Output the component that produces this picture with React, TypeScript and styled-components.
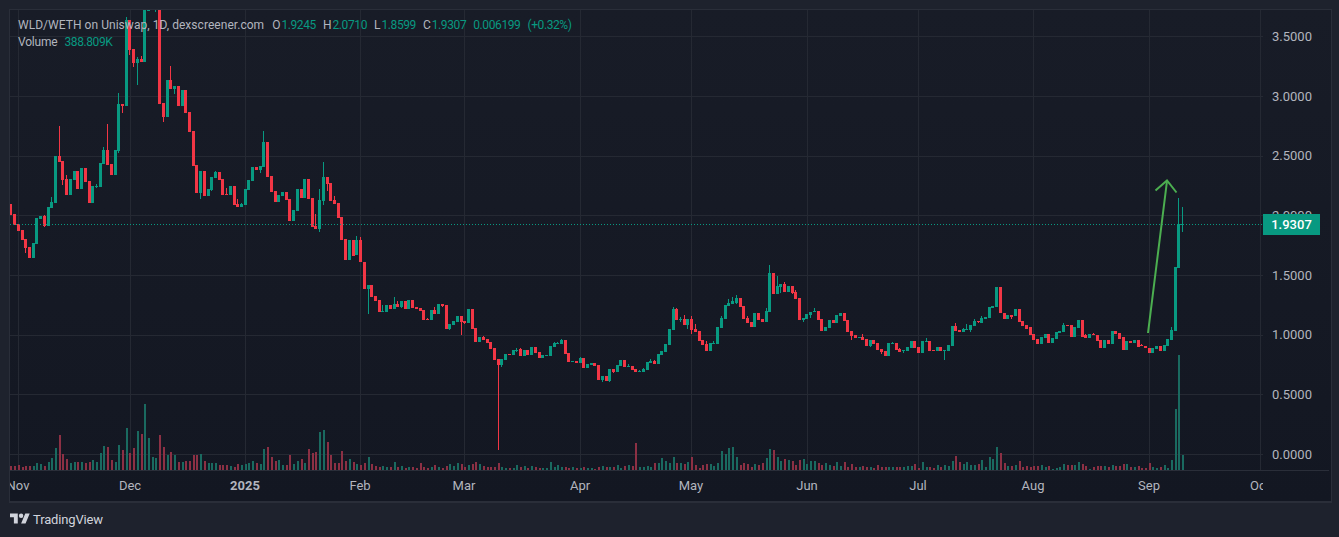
import React from 'react'
import styled, { createGlobalStyle } from 'styled-components'

const GREEN = '#089981'
const RED = '#f23645'

// one token per day: colour + body top, body bottom, wick top, wick bottom (page y)
const CANDLES = `
r204,215 r214,225 r224,231 r230,240 r239,248,,253 r247,258 g243,258 g218,244 g216,219 r216,226,215,227
g207,226 g202,208,197 g156,203 r156,162,126 r161,180,,185 r179,195,175 g179,195 g171,180 r171,189 g168,189
r168,182 r181,203 g186,203 g186,187,184,188 g163,187 g150,164,147 r150,165,124 r164,175 g150,175 g104,151,93,153
r104,106,,113 g20,106,17 r20,50,,55 r49,63,,67 g59,63,57,85 r59,62,56 g-20,62 g9,11 g-30,-10 g-10,5,,12
r-10,104 r103,117,,122 g80,117 r80,89,66 g86,89,,94 r86,106 g90,106 r90,113 r112,132 r131,166
r165,193 g171,193,,199 r171,196 g189,196 g177,190,,191 g172,178,171 r172,180 r179,195 r194,195,188 g186,195
r186,205 r204,207,199 g204,207,203 g189,205 g180,190 g167,181 r167,170 g166,170,,173 g142,167,131 r142,177
r176,192 r191,202 g195,202 g192,196 r192,200 r199,221 g210,221 g189,211 r189,198 g179,198
r179,199 r198,227 r226,229,214 g200,229,189,232 g177,201,162,205 r177,184,,191 r183,201 r200,204,196 r203,218
r217,240 r239,260 g240,260 r240,256 g240,255,236 r240,262,237
r262,289 g285,289,,314 r285,297 r296,301 r300,312 g311,312,305 g305,312 r305,309 g304,309,297 r304,307,301
g301,307,,308 r301,309 g300,309 r300,308 r307,309 r308,311 r310,320 r319,320,318 g310,320 r310,314,307
g304,314 r304,306,,307 r305,329 g324,329,,330 g321,325 g316,322 r316,322,,335 r321,323,,324 g309,323 r309,329
r328,342 g337,342 r337,340,336 r339,343 r342,349 r348,360 r359,365,,450 g359,365,,367 g354,360 r354,355
g350,355 g350,351,348,352 r349,356,348 g350,356 r350,355 g347,355 r347,353 r352,358 g355,358 g355,356
g346,356 g343,347,342 g343,344,342 g340,344,339 r340,354 r353,362 g361,362 r361,363 g358,363,357 r358,368
g364,368 g363,365 r363,366 r365,380 g376,380,,382 r376,381 g369,381,,382 r369,372,,373 g365,372 g360,366
r360,367 g366,367,364 r366,370 r369,372 g371,372,370 g369,372,368 g362,370 g361,363,359 r361,364,360 g354,364
g351,355 g344,352 g329,345 g309,330,307 r309,320,308 g319,320,317,322
r319,325,315 g319,325,,329 r319,330,316,334 r329,332,324 r331,341 r340,345 r344,351,341 g343,351 g343,344,341 g327,344
g318,328,316 g305,319 g303,306,299 g301,304,297 g298,303,295,304 r298,307 r306,319 r318,323,316 r322,327 g313,327
r313,320 r319,322 g311,322,308 g273,312,265 r273,294 g286,294,276 g284,287,,293 r284,292,282 g286,292 r286,293,,294
r292,299,290 r298,320 g318,320,,322 g314,319 g312,315,,318 g311,312,308 r311,320 r319,331 g327,331 g320,328
r320,323 g315,323 g313,316 r313,321 r320,332 r331,336,,340 r335,338 g337,338 r337,340,334 r339,346
g340,346,,347 r340,344 r343,350 r349,352,,354 r351,356 g343,356 g343,344,342 r343,350 r349,352,348 g350,351,,353
g347,351 g341,348 r341,348 r347,353 g341,353 g341,342,338 r341,351 r350,351 g347,351 r347,351
g350,351,,360 g345,351 g326,346 r326,331,323 r330,332 g329,332,328 g329,330,324 g325,330,,332 g321,326,319 r321,322,,323
g318,323,316 g317,319 g307,318 g306,308 g287,307 r287,313
r313,319 g315,319 r315,317,,319 g309,316 r309,322 r321,326 r325,329 r327,335 r334,340 r339,344
g337,344 g334,338 r334,343 g338,343 g332,339 g331,333 g325,332,323 r325,326 r325,337 g327,337
g320,328 r320,337 r335,338,334 g334,338 r334,335,333 r335,341 r340,348 g340,348 r340,344 g331,344
r331,334 r333,339 r337,350 g341,350 r341,343 g340,343 r340,347 r345,346,344 r346,348 r348,353
g348,353 g346,349 r346,351 g345,351 g339,346 g330,340,327 g267,331 g224,268,198 g224,225,207,232
`

const VOLUMES = [
  4,4,5,3,4,4,4,7,6,4,8,12,22,35,16,11,7,8,8,8,7,8,10,8,17,24,23,10,8,25,20,42,17,22,39,36,66,32,13,12,
  35,23,15,18,15,8,8,9,9,15,15,16,9,7,7,7,5,5,5,4,3,6,5,6,7,9,7,6,21,23,13,9,10,5,5,15,6,9,11,7,21,17,18,38,40,28,15,7,7,
  19,9,11,8,6,5,7,13,6,4,3,4,3,3,8,3,4,2,3,3,2,7,3,2,3,5,3,2,4,6,4,7,6,3,5,6,8,6,4,3,3,3,7,3,2,2,2,5,3,4,2,4,3,2,2,2,8,3,5,3,3,2,3,2,2,3,2,2,1,3,4,3,3,3,5,2,4,5,4,27,3,3,4,3,7,7,12,9,7,13,7,
  7,6,8,13,5,2,5,6,6,4,7,19,16,22,23,13,5,7,6,3,6,5,7,12,21,20,13,9,11,10,9,5,10,11,6,9,9,7,5,7,5,4,8,4,8,3,6,3,3,4,3,3,2,5,3,3,3,3,3,3,3,4,4,6,2,8,3,3,2,5,3,5,4,9,14,8,6,8,5,5,6,10,3,13,11,23,17,7,4,4,5,9,
  3,4,3,4,4,5,3,4,1,2,3,6,5,5,5,8,6,4,1,3,4,4,4,3,5,4,4,6,6,3,3,4,2,2,7,3,2,3,5,2,10,61,115,15,
]

type Candle = { up: boolean; top: number; bottom: number; high: number; low: number }

const parseCandles = (raw: string): Candle[] =>
  raw
    .trim()
    .split(/\s+/)
    .map((token) => {
      const [top, bottom, high, low] = token.slice(1).split(',')
      return {
        up: token[0] === 'g',
        top: Number(top),
        bottom: Number(bottom),
        high: high ? Number(high) : Number(top),
        low: low ? Number(low) : Number(bottom),
      }
    })

const candleX = (i: number) => Math.round(10.9 + 3.72 * i - 1.5)

const PRICES = ['3.5000', '3.0000', '2.5000', '2.0000', '1.5000', '1.0000', '0.5000', '0.0000']
const GRID_Y = [36, 96, 156, 215, 275, 335, 394, 454]
const MONTHS: { label: string; x: number; bold?: boolean }[] = [
  { label: 'Nov', x: 18 },
  { label: 'Dec', x: 130 },
  { label: '2025', x: 245, bold: true },
  { label: 'Feb', x: 360 },
  { label: 'Mar', x: 464 },
  { label: 'Apr', x: 580 },
  { label: 'May', x: 691 },
  { label: 'Jun', x: 807 },
  { label: 'Jul', x: 918 },
  { label: 'Aug', x: 1033 },
  { label: 'Sep', x: 1149 },
  { label: 'Oct', x: 1260 },
]

const App: React.FC = () => {
  const candles = parseCandles(CANDLES)
  return (
    <Page>
      <GlobalStyle />
      <ChartFrame>
        <Plot>
          <ChartSvg viewBox="10 10 1253 460" width={1253} height={460}>
            {GRID_Y.map((y) => (
              <rect key={y} x={10} y={y} width={1253} height={1} fill="#252933" />
            ))}
            {MONTHS.map((m) => (
              <rect key={m.label} x={m.x} y={10} width={1} height={460} fill="#252933" />
            ))}
            {VOLUMES.map((h, i) => (
              <rect
                key={i}
                x={candleX(i) + 1}
                y={470 - h}
                width={2}
                height={h}
                fill={candles[i] && candles[i].up ? '#1a6a60' : '#8c3044'}
              />
            ))}
            {candles.map((c, i) => (
              <g key={i} fill={c.up ? GREEN : RED}>
                <rect x={candleX(i) + 1} y={c.high} width={1} height={c.low - c.high} />
                <rect x={candleX(i)} y={c.top} width={3} height={c.bottom - c.top} />
              </g>
            ))}
            <line x1={10} y1={224.5} x2={1263} y2={224.5} stroke={GREEN} strokeDasharray="1 2" />
            <Arrow>
              <path d="M1148 333 L1167 181" />
              <path d="M1155.5 190.5 L1167 180.5 L1176.5 192.5" />
            </Arrow>
          </ChartSvg>
          <Legend>
            <LegendRow>
              <Title>WLD/WETH on Uniswap, 1D, dexscreener.com</Title>
              <Ohlc>O<Value>1.9245</Value></Ohlc>
              <Ohlc>H<Value>2.0710</Value></Ohlc>
              <Ohlc>L<Value>1.8599</Value></Ohlc>
              <Ohlc>C<Value>1.9307</Value></Ohlc>
              <Value>0.006199</Value>
              <Value>(+0.32%)</Value>
            </LegendRow>
            <LegendRow>
              <VolumeTitle>Volume</VolumeTitle>
              <Value>388.809K</Value>
            </LegendRow>
          </Legend>
        </Plot>
        <PriceAxis>
          {PRICES.map((p) => (
            <PriceLabel key={p}>{p}</PriceLabel>
          ))}
          <LastPrice>1.9307</LastPrice>
        </PriceAxis>
        <TimeAxis>
          {MONTHS.map((m) => (
            <TimeTick key={m.label} $bold={m.bold} style={{ left: m.x - 10 }}>
              {m.label}
            </TimeTick>
          ))}
        </TimeAxis>
        <AxisCorner />
      </ChartFrame>
      <Footer>
        <svg width="20" height="16" viewBox="0 0 36 28" fill="#d1d4dc">
          <path d="M14 22H7V11H0V4h14v18zM28 22h-8l7.5-18h8L28 22z" />
          <circle cx="20" cy="8" r="4" />
        </svg>
        <Brand>TradingView</Brand>
      </Footer>
    </Page>
  )
}

export default App

const GlobalStyle = createGlobalStyle`
  html, body {
    margin: 0;
    background: #1e222d;
    font-family: Roboto, "Liberation Sans", sans-serif;
  }
`

const Page = styled.div`
  width: 1339px;
  height: 537px;
  padding: 9px 0 0 9px;
  box-sizing: border-box;
  overflow: hidden;
  background: #1e222d;
`

const ChartFrame = styled.div`
  display: grid;
  grid-template-columns: 1253px 66px;
  grid-template-rows: 460px 31px;
  width: 1321px;
  border: 1px solid #2a2e39;
  border-bottom-width: 2px;
  background: linear-gradient(#181c27, #131722);
`

const Plot = styled.div`
  position: relative;
  overflow: hidden;
`

const ChartSvg = styled.svg`
  display: block;
  shape-rendering: crispEdges;
`

const Arrow = styled.g`
  fill: none;
  stroke: #4caf50;
  stroke-width: 2;
  shape-rendering: auto;
`

const Legend = styled.div`
  position: absolute;
  top: 7px;
  left: 8px;
  display: flex;
  flex-direction: column;
  color: #b2b5be;
  font-size: 12px;
  line-height: 17px;
`

const LegendRow = styled.div`
  display: flex;
  gap: 7px;
  white-space: nowrap;
`

const Title = styled.span`
  letter-spacing: 0.04px;
  margin-right: 1px;
`

const VolumeTitle = styled.span`
  letter-spacing: -0.2px;
`

const Ohlc = styled.span`
  display: flex;
  gap: 1px;
`

const Value = styled.span`
  color: ${GREEN};
  letter-spacing: -0.4px;
`

const PriceAxis = styled.div`
  position: relative;
  display: flex;
  flex-direction: column;
  gap: 39.7px;
  padding: 17px 0 0 9px;
  overflow: hidden;
`

const PriceLabel = styled.div`
  height: 20px;
  line-height: 20px;
  font-size: 13px;
  color: #b2b5be;
`

const LastPrice = styled.div`
  position: absolute;
  top: 204px;
  left: 0;
  width: 57px;
  height: 21px;
  line-height: 21px;
  text-align: center;
  background: ${GREEN};
  color: #fff;
  font-size: 13px;
  font-weight: 500;
`

const TimeAxis = styled.div`
  position: relative;
  border-top: 1px solid #2a2e39;
  overflow: hidden;
`

const TimeTick = styled.span<{ $bold?: boolean }>`
  position: absolute;
  top: 6px;
  transform: translateX(-50%);
  font-size: 13px;
  line-height: 18px;
  color: #b2b5be;
  font-weight: ${(p) => (p.$bold ? 700 : 400)};
`

const AxisCorner = styled.div`
  border-top: 1px solid #2a2e39;
`

const Footer = styled.div`
  display: flex;
  align-items: center;
  gap: 3px;
  height: 32px;
  padding-left: 1px;
`

const Brand = styled.span`
  font-size: 13px;
  letter-spacing: -0.15px;
  color: #d1d4dc;
`
